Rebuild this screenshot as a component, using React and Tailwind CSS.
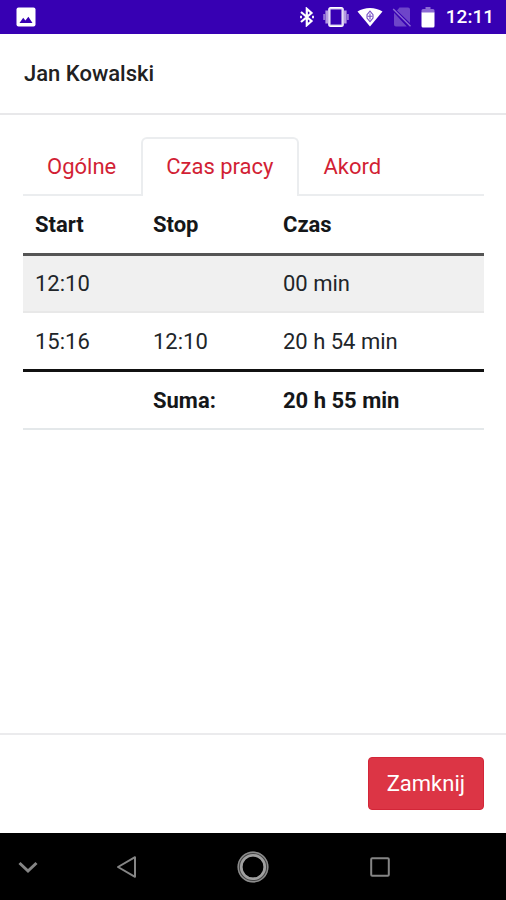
import React from "react";

const rows = [
  { start: "12:10", stop: "", time: "00 min" },
  { start: "15:16", stop: "12:10", time: "20 h 54 min" },
];

function StatusBar() {
  return (
    <div className="flex h-[34px] shrink-0 items-center justify-between bg-[#3700b3] px-3 text-white">
      <svg className="ml-1 size-5" viewBox="0 0 20 20" aria-hidden="true">
        <rect x="0.5" y="0.5" width="19" height="19" rx="2" fill="#fff" />
        <path d="M3.5 16 L7.2 10.8 L9.4 13.4 L12.4 9.8 L16.5 16 Z" fill="#3700b3" />
      </svg>
      <div className="flex items-center">
        <svg className="h-5 w-4" viewBox="0 0 16 20" fill="none" stroke="#fff" strokeWidth="2.2" aria-hidden="true">
          <path d="M2 5 L12.5 14 L7.8 18.2 V1.8 L12.5 6 L2 15" />
          <path d="M2 8.8 v2.4 M14 8.8 v2.4" strokeWidth="1.8" />
        </svg>
        <svg className="ml-2 h-5 w-[26px]" viewBox="0 0 26 20" aria-hidden="true">
          <rect x="6.2" y="1" width="13.6" height="18" rx="1.5" fill="none" stroke="#fff" strokeWidth="2" />
          <rect x="7" y="2" width="12" height="16" fill="none" stroke="#cbbcec" strokeWidth="1" />
          <path d="M3.8 3.5 v13 M22.2 3.5 v13" stroke="#b59be2" strokeWidth="2.8" />
          <path d="M1.2 7 v6 M24.8 7 v6" stroke="#9673d6" strokeWidth="2" />
        </svg>
        <svg className="ml-2 h-5 w-[26px]" viewBox="0 0 26 20" aria-hidden="true">
          <path d="M0.5 4.5 C7.5 -0.2 18.5 -0.2 25.5 4.5 L13 19.5 Z" fill="#fff" />
          <g fill="none" stroke="#7650c4" strokeWidth="1.1">
            <path d="M13 4.2 L16 7.6 V11 L13 14.6 L10 11 V7.6 Z" />
            <path d="M13 6.5 V12.5 M10.5 9.3 h5" />
          </g>
        </svg>
        <svg className="ml-[9px] h-5 w-5" viewBox="0 0 20 20" aria-hidden="true">
          <path d="M7.5 0.5 H16 Q18 0.5 18 2.5 V16 L5 3.5 Z M2 5.8 L14.8 19.5 H4 Q2 19.5 2 17.5 Z" fill="#6e45c9" />
          <path d="M1.2 2 L18.5 19.2" stroke="#8b69d4" strokeWidth="1.4" />
        </svg>
        <svg className="ml-[9px] h-[22px] w-[14px]" viewBox="0 0 14 22" aria-hidden="true">
          <path d="M4.5 1 H9.5 V3 H12 Q13.5 3 13.5 4.5 V7 H0.5 V4.5 Q0.5 3 2 3 H4.5 Z" fill="#8b69d4" />
          <path d="M0.5 6.5 H13.5 V20 Q13.5 21.5 12 21.5 H2 Q0.5 21.5 0.5 20 Z" fill="#fff" />
        </svg>
        <span className="ml-[11px] text-[19px] font-medium leading-6">12:11</span>
      </div>
    </div>
  );
}

function Tabs() {
  const plain = "rounded-t-md border-2 border-transparent px-[22px] text-[#d21f35]";
  return (
    <div role="tablist" className="flex h-[59px] gap-px border-b-2 border-[#ebedef] leading-[55px]">
      <button type="button" role="tab" aria-selected="false" className={plain}>Ogólne</button>
      <button
        type="button"
        role="tab"
        aria-selected="true"
        className="-mb-0.5 rounded-t-md border-2 border-b-0 border-[#ebedef] bg-white px-[23px] pb-1 text-[#d21f35]"
      >
        Czas pracy
      </button>
      <button type="button" role="tab" aria-selected="false" className={plain}>Akord</button>
    </div>
  );
}

function NavigationBar() {
  return (
    <nav aria-label="System" className="grid h-[67px] shrink-0 grid-cols-[1fr_2fr_2fr_2fr_1fr] items-center bg-black text-[#858585]">
      <button type="button" aria-label="Ukryj" className="flex pl-4">
        <svg className="h-5 w-6" viewBox="0 0 24 20" fill="none" stroke="currentColor" strokeWidth="3" aria-hidden="true">
          <path d="M3.5 6 L12 14 L20.5 6" />
        </svg>
      </button>
      <button type="button" aria-label="Wstecz" className="flex justify-center">
        <svg className="size-6" viewBox="0 0 24 24" fill="none" stroke="currentColor" strokeWidth="2" strokeLinejoin="round" aria-hidden="true">
          <path d="M3 12 L20 2.2 V21.8 Z" />
        </svg>
      </button>
      <button type="button" aria-label="Ekran główny" className="flex justify-center">
        <svg className="size-8" viewBox="0 0 32 32" fill="none" aria-hidden="true">
          <circle cx="16" cy="16" r="13" stroke="#444" strokeWidth="5" />
          <circle cx="16" cy="16" r="14.8" stroke="#8c8c8c" strokeWidth="1.4" />
          <circle cx="16" cy="16" r="11.8" stroke="#a0a0a0" strokeWidth="2.6" />
        </svg>
      </button>
      <button type="button" aria-label="Ostatnie" className="flex justify-center">
        <svg className="size-5" viewBox="0 0 20 20" fill="none" stroke="currentColor" strokeWidth="2" aria-hidden="true">
          <rect x="1.2" y="1.2" width="17.6" height="17.6" rx="1" />
        </svg>
      </button>
    </nav>
  );
}

export default function App() {
  return (
    <div className="flex min-h-screen flex-col bg-white font-[Roboto,sans-serif] text-[22px] leading-8 text-[#212529]">
      <StatusBar />
      <header className="border-b-2 border-[#e8e8ea] px-6 pb-[23px] pt-6">
        <h1 className="text-[22px] font-medium leading-8 text-[#212121]">Jan Kowalski</h1>
      </header>
      <main className="flex-1 pl-[23px] pr-[22px] pt-[22px]">
        <Tabs />
        <table className="w-full table-fixed border-collapse text-left">
          <thead>
            <tr className="h-[58px] border-b-[3px] border-[#555] text-[#151719]">
              <th className="w-[118px] px-3 pt-0.5 font-bold">Start</th>
              <th className="w-[130px] px-3 pt-0.5 font-bold">Stop</th>
              <th className="px-3 pt-0.5 font-bold">Czas</th>
            </tr>
          </thead>
          <tbody>
            {rows.map((row) => (
              <tr key={row.start} className="h-[58px] border-b-2 border-[#e8e8e8] odd:bg-[#f0f0f0]">
                <td className="px-3 pt-0.5">{row.start}</td>
                <td className="px-3 pt-0.5">{row.stop}</td>
                <td className="px-3 pt-0.5">{row.time}</td>
              </tr>
            ))}
          </tbody>
          <tfoot>
            <tr className="h-[59px] border-b-2 border-t-[3px] border-b-[#e4e8ea] border-t-[#111] font-bold text-[#151719]">
              <td className="px-3 pt-0.5" />
              <th scope="row" className="px-3 pt-0.5">Suma:</th>
              <td className="px-3 pt-0.5">20 h 55 min</td>
            </tr>
          </tfoot>
        </table>
      </main>
      <footer className="flex justify-end border-t-2 border-[#ebebed] px-[22px] pb-[23px] pt-[22px]">
        <button type="button" className="h-[53px] rounded border border-[#d32638] bg-[#dc3545] px-[18px] text-white">
          Zamknij
        </button>
      </footer>
      <NavigationBar />
    </div>
  );
}
